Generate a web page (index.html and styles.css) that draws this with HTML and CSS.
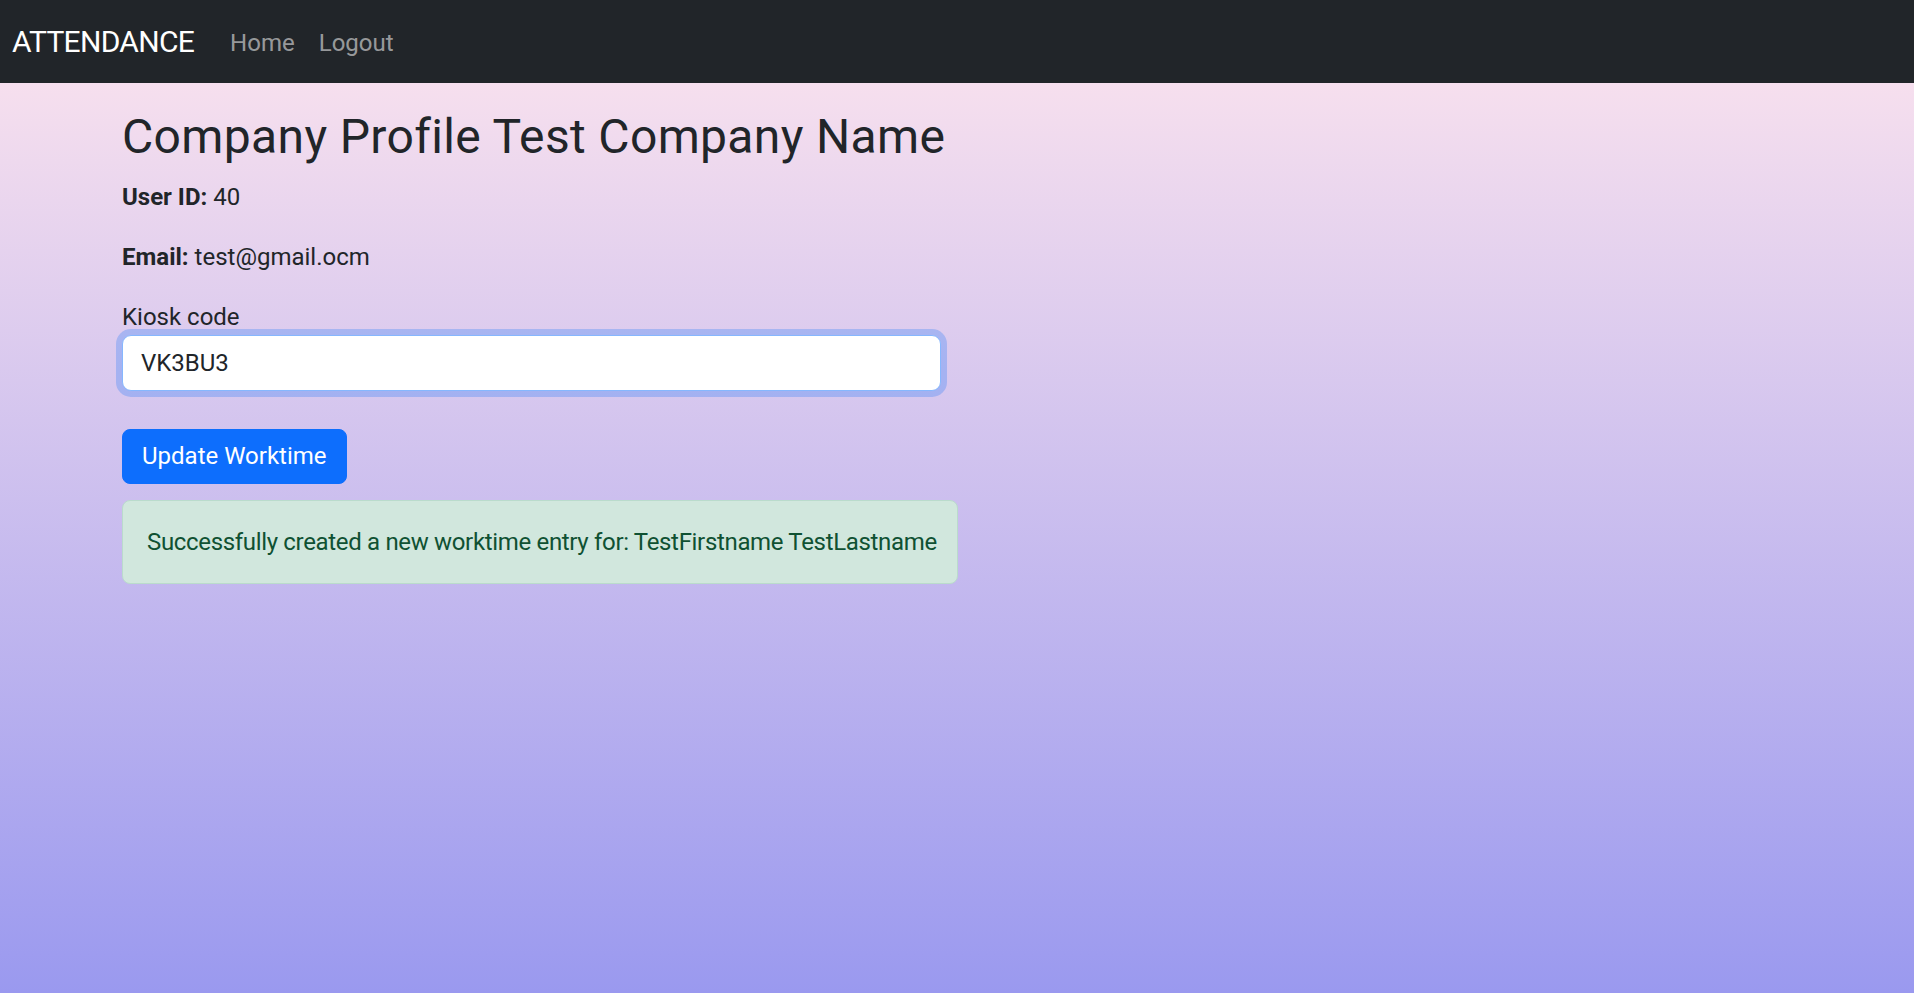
FILE: index.html
```html
<!DOCTYPE html>
<html lang="en">
<head>
<meta charset="utf-8">
<title>Attendance - Company Profile</title>
<link rel="stylesheet" href="styles.css">
</head>
<body>
<nav class="navbar">
  <a class="brand" href="#">ATTENDANCE</a>
  <ul class="nav">
    <li><a class="nav-link" href="#">Home</a></li>
    <li><a class="nav-link" href="#">Logout</a></li>
  </ul>
</nav>
<main class="page">
  <div class="container">
    <h2 class="title">Company Profile Test Company Name</h2>
    <p class="info"><strong>User ID:</strong> 40</p>
    <p class="info"><strong>Email:</strong> test@gmail.ocm</p>
    <div class="field">
      <label class="label" for="kiosk">Kiosk code</label>
      <input class="input is-focused" id="kiosk" type="text" value="VK3BU3">
    </div>
    <button class="btn" type="button">Update Worktime</button>
    <div class="alert">Successfully created a new worktime entry for: TestFirstname TestLastname</div>
  </div>
</main>
</body>
</html>
```
FILE: styles.css
```css
* { box-sizing: border-box; }
html, body { margin: 0; height: 100%; }
body {
  font-family: Roboto, "Noto Sans", "Liberation Sans", sans-serif;
  font-size: 24px;
  line-height: 36px;
  color: #212529;
  display: flex;
  flex-direction: column;
  background: #212529;
}
.navbar {
  height: 83px;
  flex: 0 0 83px;
  background: #212529;
  display: flex;
  align-items: center;
  padding: 0 12px;
}
.brand {
  font-size: 30px;
  line-height: 45px;
  letter-spacing: -0.7px;
  color: #fff;
  text-decoration: none;
  margin-right: 24px;
}
.nav {
  list-style: none;
  margin: 0;
  padding: 0;
  display: flex;
}
.nav-link {
  display: block;
  padding: 2px 12px 0;
  font-size: 24px;
  line-height: 36px;
  color: rgba(255, 255, 255, 0.55);
  text-decoration: none;
}
.page {
  flex: 1;
  background: linear-gradient(to bottom, #f6dfee 0%, #9a99ef 100%);
}
.container {
  padding: 25px 0 0 122px;
}
.title {
  font-size: 48px;
  line-height: 57.6px;
  font-weight: 400;
  letter-spacing: 0.35px;
  margin: 0 0 13px;
}
.info {
  margin: 0 0 24px;
}
.info strong { font-weight: 700; }
.label {
  display: block;
}
.input {
  display: block;
  width: 819px;
  height: 56px;
  padding: 9px 18px;
  font: inherit;
  color: #212529;
  background: #fff;
  border: 1.5px solid #dee2e6;
  border-radius: 9px;
  outline: none;
}
.input.is-focused {
  border-color: #86b7fe;
  box-shadow: 0 0 0 6px rgba(13, 110, 253, 0.25);
}
.btn {
  display: block;
  margin-top: 38px;
  height: 55px;
  padding: 8px 19px;
  font: inherit;
  color: #fff;
  background: #0d6efd;
  border: 1.5px solid #0d6efd;
  border-radius: 8px;
}
.alert {
  margin-top: 16px;
  width: 836px;
  padding: 23px 24px;
  white-space: nowrap;
  letter-spacing: -0.33px;
  color: #0f5132;
  background: #d1e7dd;
  border: 1.5px solid #badbcc;
  border-radius: 8px;
}
```
